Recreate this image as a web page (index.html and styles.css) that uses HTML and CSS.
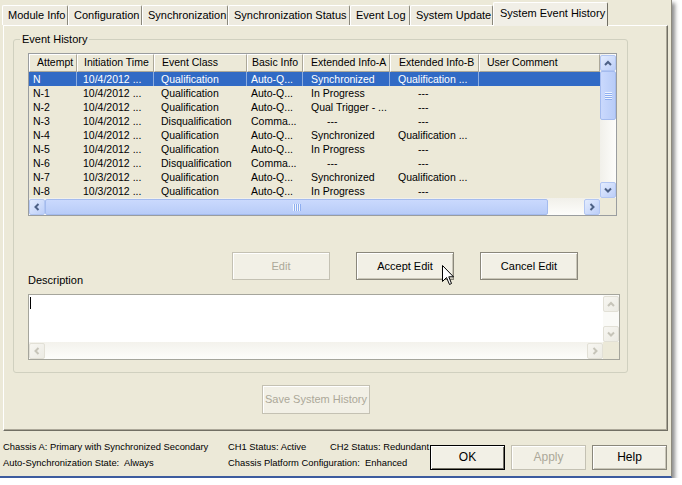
FILE: index.html
```html
<!DOCTYPE html>
<html>
<head>
<meta charset="utf-8">
<link rel="stylesheet" href="styles.css">
</head>
<body>
<div class="window">
  <div class="tabs">
    <div class="tab w1">Module Info</div>
    <div class="tab w2">Configuration</div>
    <div class="tab w3">Synchronization</div>
    <div class="tab w4">Synchronization Status</div>
    <div class="tab w5">Event Log</div>
    <div class="tab w6">System Update</div>
    <div class="tab active w7">System Event History</div>
  </div>
  <div class="panel">
    <fieldset class="group">
      <legend>Event History</legend>
      <div class="list">
        <div class="list-main">
          <div class="lv">
            <div class="lv-head">
              <div class="c1">Attempt</div><div class="c2">Initiation Time</div><div class="c3">Event Class</div><div class="c4">Basic Info</div><div class="c5">Extended Info-A</div><div class="c6">Extended Info-B</div><div class="c7">User Comment</div>
            </div>
            <div class="lv-row sel"><div class="c1">N</div><div class="c2">10/4/2012 ...</div><div class="c3">Qualification</div><div class="c4">Auto-Q...</div><div class="c5">Synchronized</div><div class="c6">Qualification ...</div><div class="c7"></div></div>
            <div class="lv-row"><div class="c1">N-1</div><div class="c2">10/4/2012 ...</div><div class="c3">Qualification</div><div class="c4">Auto-Q...</div><div class="c5">In Progress</div><div class="c6"><span class="dash">---</span></div><div class="c7"></div></div>
            <div class="lv-row"><div class="c1">N-2</div><div class="c2">10/4/2012 ...</div><div class="c3">Qualification</div><div class="c4">Auto-Q...</div><div class="c5">Qual Trigger - ...</div><div class="c6"><span class="dash">---</span></div><div class="c7"></div></div>
            <div class="lv-row"><div class="c1">N-3</div><div class="c2">10/4/2012 ...</div><div class="c3">Disqualification</div><div class="c4">Comma...</div><div class="c5"><span class="dash">---</span></div><div class="c6"><span class="dash">---</span></div><div class="c7"></div></div>
            <div class="lv-row"><div class="c1">N-4</div><div class="c2">10/4/2012 ...</div><div class="c3">Qualification</div><div class="c4">Auto-Q...</div><div class="c5">Synchronized</div><div class="c6">Qualification ...</div><div class="c7"></div></div>
            <div class="lv-row"><div class="c1">N-5</div><div class="c2">10/4/2012 ...</div><div class="c3">Qualification</div><div class="c4">Auto-Q...</div><div class="c5">In Progress</div><div class="c6"><span class="dash">---</span></div><div class="c7"></div></div>
            <div class="lv-row"><div class="c1">N-6</div><div class="c2">10/4/2012 ...</div><div class="c3">Disqualification</div><div class="c4">Comma...</div><div class="c5"><span class="dash">---</span></div><div class="c6"><span class="dash">---</span></div><div class="c7"></div></div>
            <div class="lv-row"><div class="c1">N-7</div><div class="c2">10/3/2012 ...</div><div class="c3">Qualification</div><div class="c4">Auto-Q...</div><div class="c5">Synchronized</div><div class="c6">Qualification ...</div><div class="c7"></div></div>
            <div class="lv-row"><div class="c1">N-8</div><div class="c2">10/3/2012 ...</div><div class="c3">Qualification</div><div class="c4">Auto-Q...</div><div class="c5">In Progress</div><div class="c6"><span class="dash">---</span></div><div class="c7"></div></div>
          </div>
          <div class="vscroll">
            <div class="sb-btn"><svg viewBox="0 0 8 8"><polyline points="1,6 4,3 7,6"/></svg></div>
            <div class="vthumb"><div class="vgrip"></div></div>
            <div class="vtrack"></div>
            <div class="sb-btn"><svg viewBox="0 0 8 8"><polyline points="1,2.5 4,5.5 7,2.5"/></svg></div>
          </div>
        </div>
        <div class="hscroll-row">
          <div class="hscroll">
            <div class="sb-btn"><svg viewBox="0 0 8 8"><polyline points="5.5,1 2.5,4 5.5,7"/></svg></div>
            <div class="hthumb"><div class="hgrip"></div></div>
            <div class="htrack"></div>
            <div class="sb-btn"><svg viewBox="0 0 8 8"><polyline points="2.5,1 5.5,4 2.5,7"/></svg></div>
          </div>
          <div class="corner"></div>
        </div>
      </div>

      <div class="edit-buttons">
        <div class="btn disabled">Edit</div>
        <div class="btn accept">Accept Edit
          <svg class="cursor" viewBox="0 0 13 21"><path d="M0.5,0.5 L0.5,16.5 L4.5,12.5 L7.5,19.5 L9.5,18.5 L6.8,11.8 L11.5,11.8 Z"/></svg>
        </div>
        <div class="btn">Cancel Edit</div>
      </div>

      <div class="desc-label">Description</div>
      <div class="textbox">
        <div class="tb-main">
          <div class="tb-text"><div class="caret"></div></div>
          <div class="tb-vscroll">
            <div class="sb-btn off"><svg viewBox="0 0 8 8"><polyline points="1,6 4,3 7,6"/></svg></div>
            <div class="tb-track"></div>
            <div class="sb-btn off"><svg viewBox="0 0 8 8"><polyline points="1,2.5 4,5.5 7,2.5"/></svg></div>
          </div>
        </div>
        <div class="tb-hrow">
          <div class="tb-hscroll">
            <div class="sb-btn off"><svg viewBox="0 0 8 8"><polyline points="5.5,1 2.5,4 5.5,7"/></svg></div>
            <div class="tb-htrack"></div>
            <div class="sb-btn off"><svg viewBox="0 0 8 8"><polyline points="2.5,1 5.5,4 2.5,7"/></svg></div>
          </div>
          <div class="corner"></div>
        </div>
      </div>
    </fieldset>
    <div class="save-row">
      <div class="btn disabled save">Save System History</div>
    </div>
  </div>
  <div class="statusbar">
    <div class="status-text">
      <span>Chassis A: Primary with Synchronized Secondary</span>
      <span>CH1 Status: Active</span>
      <span>CH2 Status: Redundant</span>
      <span>Auto-Synchronization State:  Always</span>
      <span class="span2">Chassis Platform Configuration:  Enhanced</span>
    </div>
    <div class="dlg-buttons">
      <div class="btn dlg default">OK</div>
      <div class="btn dlg disabled">Apply</div>
      <div class="btn dlg">Help</div>
    </div>
  </div>
</div>
</body>
</html>
```
FILE: styles.css
```css
* { box-sizing: border-box; }
html, body { margin: 0; padding: 0; background: #ffffff; }
body {
  font-family: "Liberation Sans", Arial, sans-serif;
  font-size: 10.5px;
  line-height: 13px;
  color: #000;
}

.window {
  width: 672px;
  background: #ECE9D8;
  border-right: 1px solid #8D8A7E;
  border-bottom: 2px solid #3D5C9E;
  box-shadow: 3px 3px 4px rgba(0, 0, 0, 0.45);
  display: flex;
  flex-direction: column;
}

/* Tabs */
.tabs {
  display: flex;
  align-items: flex-end;
  height: 25px;
  padding-left: 2px;
  position: relative;
  z-index: 1;
}
.tab {
  height: 20px;
  line-height: 19px;
  padding-left: 5px;
  font-size: 11px;
  background: #EEEBE0;
  border-top: 1px solid #fff;
  border-left: 1px solid #fff;
  border-right: 1px solid #8B887C;
  border-radius: 2px 2px 0 0;
  white-space: nowrap;
}
.tab.active {
  height: 24px;
  margin-bottom: -1px;
  line-height: 21px;
  padding-left: 6px;
  background: #F1EFE7;
  border-right-color: #716F64;
}
.w1 { width: 66px; }
.w2 { width: 74px; }
.w3 { width: 86px; }
.w4 { width: 122px; }
.w5 { width: 60px; }
.w6 { width: 83px; }
.w7 { width: 115px; }

/* Panel */
.panel {
  margin-left: 3px;
  width: 665px;
  height: 406px;
  border: 1px solid;
  border-color: #fff #716F64 #716F64 #fff;
  box-shadow: inset -1px -1px 0 #ACA899;
}

.group {
  margin: 7px 0 0 9px;
  width: 615px;
  padding: 7px 0 12px 14px;
  border: 1px solid #D0D0BF;
  border-radius: 3px;
  min-width: 0;
}
.group legend {
  padding: 0 2px;
  margin-left: -8px;
  line-height: 13px;
  font-size: 11px;
}

/* List view */
.list {
  width: 589px;
  height: 163px;
  border: 1px solid #9A9D9F;
  background: #ECE9D8;
  display: flex;
  flex-direction: column;
}
.list-main { display: flex; height: 144px; }
.lv { width: 571px; overflow: hidden; }
.lv-head, .lv-row {
  display: grid;
  grid-template-columns: 48px 77px 93px 56px 87px 89px 121px;
}
.lv-head { height: 18px; }
.lv-head > div {
  border-top: 1px solid #fff;
  border-left: 1px solid #fff;
  border-right: 1px solid #ACA899;
  border-bottom: 1px solid #ACA899;
  line-height: 15px;
  white-space: nowrap;
  overflow: hidden;
}
.lv-head .c1 { padding-left: 7px; }
.lv-head .c2 { padding-left: 6px; }
.lv-head .c3 { padding-left: 7px; }
.lv-head .c4 { padding-left: 4px; }
.lv-head .c5 { padding-left: 7px; }
.lv-head .c6 { padding-left: 8px; }
.lv-head .c7 { padding-left: 7px; }

.lv-row { height: 14px; }
.lv-row > div {
  line-height: 14px;
  white-space: nowrap;
  overflow: hidden;
}
.lv-row .c1 { padding-left: 4px; }
.lv-row .c2 { padding-left: 6px; }
.lv-row .c3 { padding-left: 7px; }
.lv-row .c4 { padding-left: 4px; }
.lv-row .c5 { padding-left: 8px; }
.lv-row .c6 { padding-left: 8px; }
.lv-row .c5 .dash { padding-left: 16px; }
.lv-row .c6 .dash { padding-left: 20px; }
.lv-row.sel { background: #316AC5; color: #fff; }
.lv-row.sel > div { box-shadow: inset -1px 0 0 rgba(255, 255, 255, 0.45); }
.lv-row.sel > div.c7 { box-shadow: none; }

/* Scrollbars */
.vscroll {
  width: 16px;
  display: flex;
  flex-direction: column;
  background: linear-gradient(to right, #F1F0EA, #FDFDFB);
  padding-top: 1px;
}
.sb-btn {
  width: 16px;
  height: 16px;
  flex: none;
  background: linear-gradient(135deg, #E3ECFE, #BCCEF8);
  border: 1px solid #B2C6F2;
  border-radius: 2px;
  display: flex;
  align-items: center;
  justify-content: center;
}
.sb-btn svg { width: 8px; height: 8px; }
.sb-btn polyline {
  fill: none;
  stroke: #4D6185;
  stroke-width: 2;
}
.vthumb {
  height: 49px;
  flex: none;
  background: linear-gradient(to right, #CAD9FD, #B8CCF8);
  border: 1px solid #A4BBEE;
  border-radius: 2px;
  display: flex;
  align-items: center;
  justify-content: center;
}
.vgrip {
  width: 7px;
  height: 8px;
  background: repeating-linear-gradient(to bottom, #EEF4FE 0 1px, #8EAEF0 1px 2px);
}
.vtrack { flex: 1; }

.hscroll-row { display: flex; height: 17px; }
.hscroll {
  width: 571px;
  display: flex;
  background: linear-gradient(to bottom, #F1F0EA, #FDFDFB);
  padding-top: 1px;
}
.hthumb {
  width: 503px;
  flex: none;
  height: 16px;
  background: linear-gradient(to bottom, #CAD9FD, #B8CCF8);
  border: 1px solid #A4BBEE;
  border-radius: 2px;
  display: flex;
  align-items: center;
  justify-content: center;
}
.hgrip {
  width: 8px;
  height: 7px;
  background: repeating-linear-gradient(to right, #EEF4FE 0 1px, #8EAEF0 1px 2px);
}
.htrack { flex: 1; }
.corner { width: 16px; background: #ECE9D8; }

/* Buttons */
.btn {
  display: flex;
  align-items: center;
  justify-content: center;
  background: #F2F0E6;
  border: 1px solid #8A877B;
  box-shadow: inset 1px 1px 0 #fff, inset -1px -1px 0 #C9C6B8;
  color: #000;
  white-space: nowrap;
  font-size: 11px;
}
.btn.disabled {
  color: #ACA899;
  border-color: #C4C1B3;
  box-shadow: inset 1px 1px 0 #fff;
}

.edit-buttons {
  display: flex;
  gap: 26px;
  margin-top: 36px;
  padding-left: 204px;
}
.edit-buttons .btn { width: 98px; height: 28px; }
.accept { position: relative; }
.cursor {
  position: absolute;
  left: 85px;
  top: 12px;
  width: 13px;
  height: 21px;
}
.cursor path { fill: #fff; stroke: #000; stroke-width: 1; }

.desc-label { margin-top: -6px; line-height: 13px; font-size: 11px; }

.textbox {
  margin-top: 7px;
  width: 592px;
  height: 66px;
  border: 1px solid #A5A59C;
  display: flex;
  flex-direction: column;
  background: #fff;
}
.tb-main { display: flex; height: 47px; }
.tb-text { flex: 1; padding: 2px 0 0 1px; }
.caret { width: 1px; height: 12px; background: #000; }
.tb-vscroll {
  width: 16px;
  display: flex;
  flex-direction: column;
  background: #FAFAF7;
  padding-top: 1px;
}
.tb-track { flex: 1; }
.tb-hrow { display: flex; height: 17px; }
.tb-hscroll { flex: 1; display: flex; background: linear-gradient(to bottom, #F3F2EC, #FDFDFB); padding-top: 1px; }
.tb-htrack { flex: 1; }
.sb-btn.off {
  background: linear-gradient(135deg, #F7F6F1, #ECEBE4);
  border-color: #E2E0D6;
}
.sb-btn.off polyline { stroke: #C6C4B9; }

.save-row { margin-top: 12px; padding-left: 258px; }
.save { width: 108px; height: 29px; }

/* Status bar */
.statusbar { display: flex; height: 45px; }
.status-text {
  width: 430px;
  padding: 8px 0 0 3px;
  display: grid;
  grid-template-columns: 225px 102px auto;
  grid-auto-rows: 16px;
  font-size: 9.4px;
  line-height: 16px;
  white-space: pre;
}
.span2 { grid-column: span 2; }
.dlg-buttons { display: flex; gap: 6px; margin-top: 14px; }
.btn.dlg { width: 75px; height: 25px; font-size: 12px; }
.btn.default {
  border-color: #000;
  box-shadow: inset 1px 1px 0 #fff, inset -1px -1px 0 #716F64;
}
```
